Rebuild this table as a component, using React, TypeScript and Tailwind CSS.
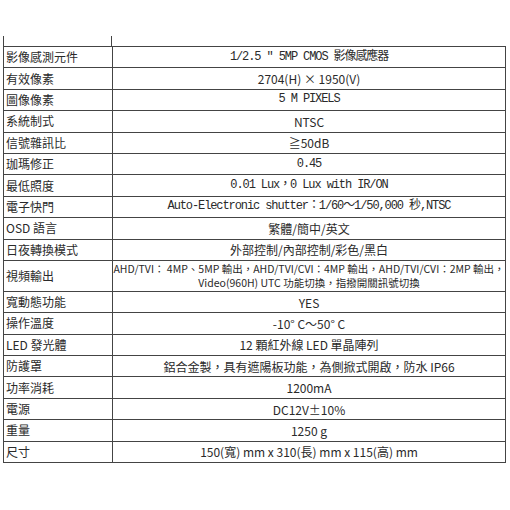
const SANS = "font-['Noto_Sans_CJK_TC','Noto_Sans',sans-serif]";
const MONO = "font-['Liberation_Mono','Noto_Sans_CJK_TC',monospace] text-[12px] tracking-[-1.1px]";

type Row = { label: string; value: string[]; mono?: boolean; tall?: boolean };

const ROWS: Row[] = [
  { label: "影像感測元件", value: ["1/2.5 \" 5MP CMOS 影像感應器"], mono: true },
  { label: "有效像素", value: ["2704(H) × 1950(V)"] },
  { label: "圖像像素", value: ["5 M PIXELS"], mono: true },
  { label: "系統制式", value: ["NTSC"] },
  { label: "信號雜訊比", value: ["≧50dB"] },
  { label: "珈瑪修正", value: ["0.45"], mono: true },
  { label: "最低照度", value: ["0.01 Lux，0 Lux with IR/ON"], mono: true },
  { label: "電子快門", value: ["Auto-Electronic shutter：1/60～1/50,000 秒,NTSC"], mono: true },
  { label: "OSD 語言", value: ["繁體/簡中/英文"] },
  { label: "日夜轉換模式", value: ["外部控制/內部控制/彩色/黑白"] },
  {
    label: "視頻輸出",
    value: [
      "AHD/TVI： 4MP、5MP 輸出，AHD/TVI/CVI：4MP 輸出，AHD/TVI/CVI：2MP 輸出，",
      "Video(960H) UTC 功能切換，指撥開關訊號切換",
    ],
    tall: true,
  },
  { label: "寬動態功能", value: ["YES"] },
  { label: "操作溫度", value: ["-10° C～50° C"] },
  { label: "LED 發光體", value: ["12 顆紅外線 LED 單晶陣列"] },
  { label: "防護罩", value: ["鋁合金製，具有遮陽板功能，為側掀式開啟，防水 IP66"] },
  { label: "功率消耗", value: ["1200mA"] },
  { label: "電源", value: ["DC12V±10%"] },
  { label: "重量", value: ["1250 g"] },
  { label: "尺寸", value: ["150(寬) mm x 310(長) mm x 115(高) mm"] },
];

export default function App() {
  return (
    <div className={`w-[510px] h-[510px] bg-white text-[#2a2a2a] ${SANS}`}>
      <div className="pt-[36px] pl-[3px] pr-[4px]">
        {/* stub of the table above, cut off */}
        <div className="grid grid-cols-[109px_1fr] h-[10px]">
          <div className="border-l border-r border-[#444]" />
          <div />
        </div>
        <div className="border-t border-l border-r border-[#444]">
          {ROWS.map((r) => (
            <div
              key={r.label}
              className={`grid grid-cols-[109px_1fr] border-b border-[#444] ${r.tall ? "h-[31px]" : "h-[21.4px]"}`}
            >
              <div className="border-r border-[#444] flex items-center pl-[2px] text-[12px] leading-none whitespace-nowrap">
                {r.label}
              </div>
              <div
                className={`flex flex-col items-center justify-center whitespace-nowrap ${
                  r.mono ? MONO : r.tall ? "text-[10.5px]" : "text-[12px]"
                }`}
              >
                {r.value.map((v, i) => (
                  <span key={i} className={r.tall ? "leading-[14px]" : "leading-[13px]"}>
                    {v}
                  </span>
                ))}
              </div>
            </div>
          ))}
        </div>
      </div>
    </div>
  );
}
